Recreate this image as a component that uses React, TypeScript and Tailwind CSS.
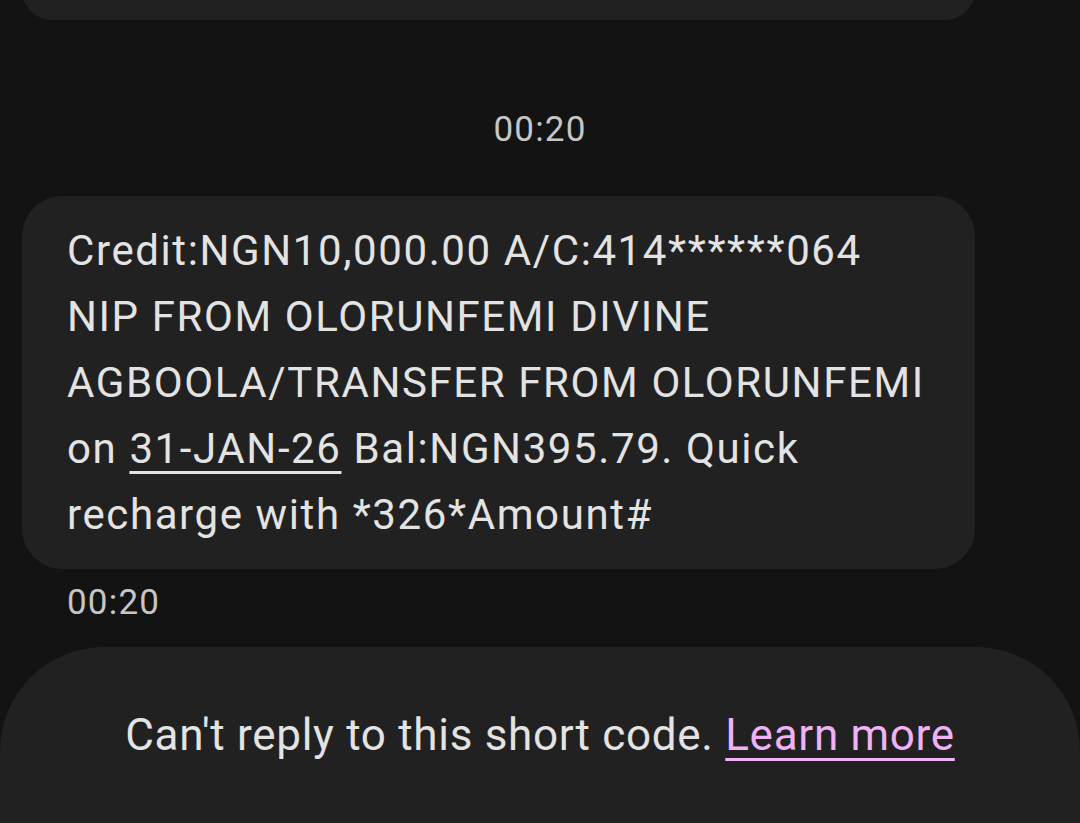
export default function App() {
  return (
    <div
      className="h-[823px] w-[1080px] overflow-hidden bg-[#131313] flex flex-col"
      style={{ fontFamily: 'Roboto, "Noto Sans", sans-serif' }}
    >
      {/* previous message, cut off at the top */}
      <div className="-mt-[40px] h-[60px] mx-[22px] w-[953px] rounded-[40px] bg-[#212121] shrink-0" />

      <div className="mt-[90px] text-center text-[35px] leading-[40px] tracking-[1.2px] text-[#c6c6c6]">00:20</div>

      <div className="mt-[46px] mx-[22px] w-[953px] rounded-[40px] bg-[#212121] pt-[22px] pb-[21px] pl-[45px] pr-[10px] text-[42px] leading-[66px] tracking-[1.6px] text-[#e3e3e3]">
        Credit:NGN10,000.00 A/C:414******064
        <br />
        NIP FROM OLORUNFEMI DIVINE
        <br />
        AGBOOLA/TRANSFER FROM OLORUNFEMI
        <br />
        on{' '}
        <span className="underline decoration-[3px] underline-offset-[8px]">31-JAN-26</span> Bal:NGN395.79. Quick
        <br />
        recharge with *326*Amount#
      </div>

      <div className="mt-[14px] pl-[67px] text-[35px] leading-[40px] tracking-[1.2px] text-[#c6c6c6]">00:20</div>

      <div className="mt-[24px] flex-1 rounded-t-[104px] bg-[#212121] pt-[63px] text-center text-[44px] leading-[50px] tracking-[0.7px] text-[#e3e3e3]">
        Can't reply to this short code.{' '}
        <a className="text-[#efb2f4] underline decoration-[3px] underline-offset-[8px]">Learn more</a>
      </div>
    </div>
  );
}
